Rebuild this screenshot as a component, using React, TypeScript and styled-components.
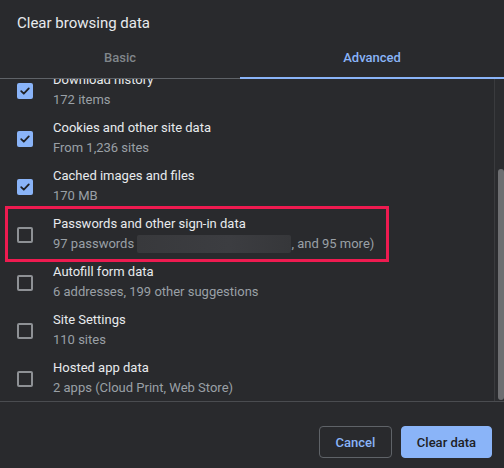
import React from "react";
import styled, { createGlobalStyle } from "styled-components";

const GlobalStyle = createGlobalStyle`
  html, body {
    margin: 0;
    padding: 0;
    background: #292a2d;
  }
  body {
    font-family: Roboto, "Liberation Sans", sans-serif;
    -webkit-font-smoothing: antialiased;
  }
`;

const Dialog = styled.div`
  width: 504px;
  height: 468px;
  display: flex;
  flex-direction: column;
  background: #292a2d;
  overflow: hidden;
`;

const Title = styled.div`
  height: 36px;
  padding: 10px 17px 0;
  display: flex;
  align-items: center;
  box-sizing: border-box;
  font-size: 15px;
  color: #e8eaed;
`;

const TabBar = styled.div`
  display: flex;
  height: 43px;
  border-bottom: 1px solid #5f6368;
  box-sizing: border-box;
`;

const Tab = styled.div<{ $active?: boolean }>`
  flex: ${(p) => (p.$active ? "1" : "0 0 240px")};
  display: flex;
  align-items: center;
  justify-content: center;
  font-size: 13px;
  font-weight: 500;
  color: ${(p) => (p.$active ? "#8ab4f8" : "#80868b")};
  box-shadow: ${(p) => (p.$active ? "inset 0 -2px 0 #8ab4f8" : "none")};
  margin-bottom: -1px;
`;

const Body = styled.div`
  height: 322px;
  display: flex;
  border-bottom: 1px solid #4a4c50;
`;

const ListViewport = styled.div`
  flex: 1;
  overflow: hidden;
`;

const List = styled.div`
  margin-top: -12px;
`;

const Row = styled.div`
  position: relative;
  height: 48px;
  display: flex;
  align-items: center;
  padding-left: 17px;
  gap: 20px;
`;

const CheckBox = styled.div<{ $checked: boolean }>`
  width: 16px;
  height: 16px;
  box-sizing: border-box;
  border-radius: 2px;
  flex-shrink: 0;
  display: flex;
  align-items: center;
  justify-content: center;
  background: ${(p) => (p.$checked ? "#8ab4f8" : "transparent")};
  border: ${(p) => (p.$checked ? "none" : "2px solid #8e9195")};
`;

const RowText = styled.div`
  display: flex;
  flex-direction: column;
  margin-top: -2px;
`;

const RowTitle = styled.div`
  font-size: 13px;
  line-height: 20px;
  color: #e8eaed;
`;

const RowDetail = styled.div`
  font-size: 13px;
  line-height: 20px;
  color: #9aa0a6;
  display: flex;
  align-items: center;
  white-space: pre;
`;

const Redacted = styled.span`
  display: inline-block;
  width: 154px;
  height: 18px;
  background: linear-gradient(90deg, #38393c, #3c3d41 60%, #36373a);
  border-radius: 2px;
`;

const Highlight = styled.div`
  position: absolute;
  left: 5px;
  top: -5px;
  width: 384px;
  height: 56px;
  box-sizing: border-box;
  border: 3px solid #ee1b50;
  pointer-events: none;
`;

const ScrollTrack = styled.div`
  width: 9px;
  border-left: 1px solid #3a3b3e;
  background: #2b2c2f;
  position: relative;
`;

const ScrollThumb = styled.div`
  position: absolute;
  left: 3px;
  right: 0;
  top: 90px;
  bottom: 1px;
  background: #6d6e71;
  border-radius: 3px;
`;

const Footer = styled.div`
  flex: 1;
  display: flex;
  justify-content: flex-end;
  align-items: flex-start;
  gap: 9px;
  padding: 24px 12px 0 0;
`;

const Button = styled.button<{ $primary?: boolean }>`
  height: 32px;
  width: ${(p) => (p.$primary ? "91px" : "73px")};
  padding: 0;
  box-sizing: border-box;
  border-radius: 4px;
  font-family: Roboto, "Liberation Sans", sans-serif;
  font-size: 13px;
  font-weight: 500;
  cursor: pointer;
  color: ${(p) => (p.$primary ? "#202124" : "#8ab4f8")};
  background: ${(p) => (p.$primary ? "#8ab4f8" : "transparent")};
  border: 1px solid ${(p) => (p.$primary ? "#8ab4f8" : "#5f6368")};
`;

type Item = {
  title: string;
  detail: React.ReactNode;
  checked: boolean;
  highlight?: boolean;
};

const items: Item[] = [
  { title: "Download history", detail: "172 items", checked: true },
  { title: "Cookies and other site data", detail: "From 1,236 sites", checked: true },
  { title: "Cached images and files", detail: "170 MB", checked: true },
  {
    title: "Passwords and other sign-in data",
    detail: (
      <>
        97 passwords <Redacted />, and 95 more)
      </>
    ),
    checked: false,
    highlight: true,
  },
  { title: "Autofill form data", detail: "6 addresses, 199 other suggestions", checked: false },
  { title: "Site Settings", detail: "110 sites", checked: false },
  { title: "Hosted app data", detail: "2 apps (Cloud Print, Web Store)", checked: false },
];

const Check = () => (
  <svg width="12" height="12" viewBox="0 0 12 12">
    <path d="M2.2 6.2 L4.8 8.7 L9.8 3.4" fill="none" stroke="#202124" strokeWidth="1.8" strokeLinecap="round" strokeLinejoin="round" />
  </svg>
);

const App: React.FunctionComponent = () => {
  return (
    <>
      <GlobalStyle />
      <Dialog>
        <Title>Clear browsing data</Title>
        <TabBar>
          <Tab>Basic</Tab>
          <Tab $active>Advanced</Tab>
        </TabBar>
        <Body>
          <ListViewport>
            <List>
              {items.map((item) => (
                <Row key={item.title}>
                  <CheckBox $checked={item.checked}>{item.checked && <Check />}</CheckBox>
                  <RowText>
                    <RowTitle>{item.title}</RowTitle>
                    <RowDetail>{item.detail}</RowDetail>
                  </RowText>
                  {item.highlight && <Highlight />}
                </Row>
              ))}
            </List>
          </ListViewport>
          <ScrollTrack>
            <ScrollThumb />
          </ScrollTrack>
        </Body>
        <Footer>
          <Button>Cancel</Button>
          <Button $primary>Clear data</Button>
        </Footer>
      </Dialog>
    </>
  );
};
export default App;
